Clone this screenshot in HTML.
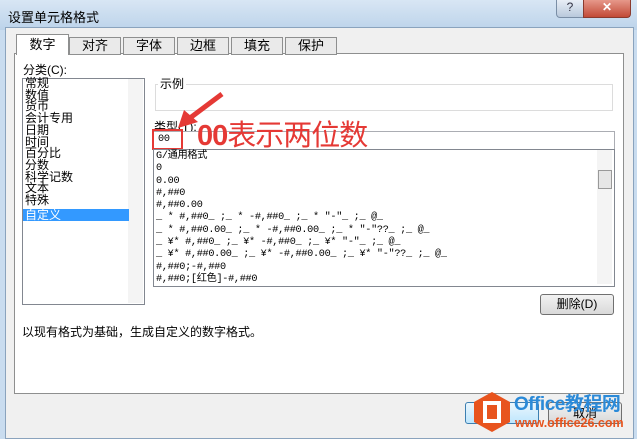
<!DOCTYPE html><html><head><meta charset="utf-8"><style>
body{margin:0;width:637px;height:439px;overflow:hidden;background:#c9dcef;font-family:"Liberation Sans","Noto Sans CJK SC",sans-serif;font-size:12px;color:#000;position:relative}
.a{position:absolute}
.m{font-family:"Liberation Mono","Noto Sans CJK SC",monospace;font-size:10.2px;line-height:12.3px;white-space:pre;letter-spacing:-0.3px}
</style></head><body>
<div class="a" style="left:0;top:0;width:637px;height:30px;background:linear-gradient(#d8e6f4,#bcd3ea)"></div>
<div class="a" style="left:8px;top:7px;font-size:13px">设置单元格格式</div>
<div class="a" style="left:556px;top:0;width:26px;height:17px;background:linear-gradient(#e8eef6,#b9c9dc);border:1px solid #7a8ea6;border-top:none;border-radius:0 0 0 4px;text-align:center;font-size:12px;color:#334">?</div>
<div class="a" style="left:583px;top:0;width:46px;height:17px;background:linear-gradient(#e6988a,#c24a37);border:1px solid #8a3a2e;border-top:none;border-radius:0 0 4px 0;text-align:center;color:#fff;font-weight:bold">✕</div>
<div class="a" style="left:5px;top:27px;width:627px;height:410px;background:#f0f0f0;border:1px solid #8aa3bd"></div>
<div class="a" style="left:14px;top:53px;width:608px;height:339px;background:#fff;border:1px solid #8e8f8f"></div>
<div class="a" style="left:16px;top:34px;width:51px;height:20px;background:#fff;border:1px solid #8e8f8f;border-bottom:none;text-align:center;line-height:20px;font-size:13px">数字</div>
<div class="a" style="left:69px;top:37px;width:50px;height:16px;background:#eaeaea;border:1px solid #8e8f8f;text-align:center;line-height:16px;font-size:13px">对齐</div>
<div class="a" style="left:123px;top:37px;width:50px;height:16px;background:#eaeaea;border:1px solid #8e8f8f;text-align:center;line-height:16px;font-size:13px">字体</div>
<div class="a" style="left:177px;top:37px;width:50px;height:16px;background:#eaeaea;border:1px solid #8e8f8f;text-align:center;line-height:16px;font-size:13px">边框</div>
<div class="a" style="left:231px;top:37px;width:50px;height:16px;background:#eaeaea;border:1px solid #8e8f8f;text-align:center;line-height:16px;font-size:13px">填充</div>
<div class="a" style="left:285px;top:37px;width:50px;height:16px;background:#eaeaea;border:1px solid #8e8f8f;text-align:center;line-height:16px;font-size:13px">保护</div>
<div class="a" style="left:23px;top:61px">分类(C):</div>
<div class="a" style="left:22px;top:78px;width:121px;height:225px;border:1px solid #828790;background:#fff"></div>
<div class="a" style="left:128px;top:79px;width:15px;height:224px;background:#f4f4f4"></div>
<div class="a" style="left:25px;top:78px;line-height:11.7px;font-size:12px">常规<br>数值<br>货币<br>会计专用<br>日期<br>时间<br>百分比<br>分数<br>科学记数<br>文本<br>特殊</div>
<div class="a" style="left:23px;top:209px;width:104px;height:12px;background:#3399ff;color:#fff;line-height:12px;padding-left:2px">自定义</div>
<div class="a" style="left:155px;top:84px;width:456px;height:25px;border:1px solid #dcdcdc"></div>
<div class="a" style="left:158px;top:75px;background:#fff;padding:0 2px;font-size:12px">示例</div>
<div class="a" style="left:154px;top:118px">类型(T):</div>
<div class="a" style="left:153px;top:131px;width:460px;height:17px;border:1px solid #abadb3;background:#fff"></div>
<div class="a" style="left:152px;top:129px;width:27px;height:17px;border:2px solid #e53935"></div>
<div class="a m" style="left:158px;top:134px">00</div>
<div class="a" style="left:197px;top:120px;font-size:29px;color:#e53935;line-height:32px;letter-spacing:-1px"><b style="font-family:'Liberation Sans'">00</b>表示两位数</div>
<svg class="a" style="left:176px;top:92px" width="50" height="40"><path d="M46 2 L14 26" stroke="#e53935" stroke-width="5"/><path d="M2 36 L8 18 L22 30 Z" fill="#e53935"/></svg>
<div class="a" style="left:153px;top:149px;width:460px;height:136px;border:1px solid #828790;background:#fff"></div>
<div class="a" style="left:597px;top:150px;width:15px;height:134px;background:#f4f4f4"></div>
<div class="a" style="left:598px;top:170px;width:12px;height:17px;background:#e6e6e6;border:1px solid #999"></div>
<div class="a m" style="left:156px;top:151px">G/通用格式
0
0.00
#,##0
#,##0.00
_ * #,##0_ ;_ * -#,##0_ ;_ * "-"_ ;_ @_
_ * #,##0.00_ ;_ * -#,##0.00_ ;_ * "-"??_ ;_ @_
_ ¥* #,##0_ ;_ ¥* -#,##0_ ;_ ¥* "-"_ ;_ @_
_ ¥* #,##0.00_ ;_ ¥* -#,##0.00_ ;_ ¥* "-"??_ ;_ @_
#,##0;-#,##0
#,##0;[红色]-#,##0</div>
<div class="a" style="left:540px;top:294px;width:72px;height:19px;border:1px solid #707070;border-radius:3px;background:linear-gradient(#f2f2f2,#d9d9d9);text-align:center;line-height:19px">删除(D)</div>
<div class="a" style="left:22px;top:323px">以现有格式为基础，生成自定义的数字格式。</div>
<div class="a" style="left:465px;top:402px;width:72px;height:20px;border:1px solid #3c7fb1;border-radius:3px;background:linear-gradient(#eaf6fd,#bee6fd)"></div>
<div class="a" style="left:548px;top:402px;width:72px;height:20px;border:1px solid #707070;border-radius:3px;background:linear-gradient(#f2f2f2,#d9d9d9);text-align:center;line-height:20px">取消</div>
<svg class="a" style="left:472px;top:390px" width="40" height="44"><polygon points="20,2 38,12 38,32 20,42 2,32 2,12" fill="#e8541e"/><rect x="13" y="13" width="14" height="18" fill="none" stroke="#fff" stroke-width="4"/></svg>
<div class="a" style="left:514px;top:394px;font-size:19px;font-weight:bold;color:#2b8ad8;line-height:22px;white-space:nowrap;letter-spacing:-0.5px">Office教程网</div>
<div class="a" style="left:515px;top:416px;font-size:12.5px;font-weight:bold;color:#e8541e;white-space:nowrap">www.office26.com</div>
</body></html>
